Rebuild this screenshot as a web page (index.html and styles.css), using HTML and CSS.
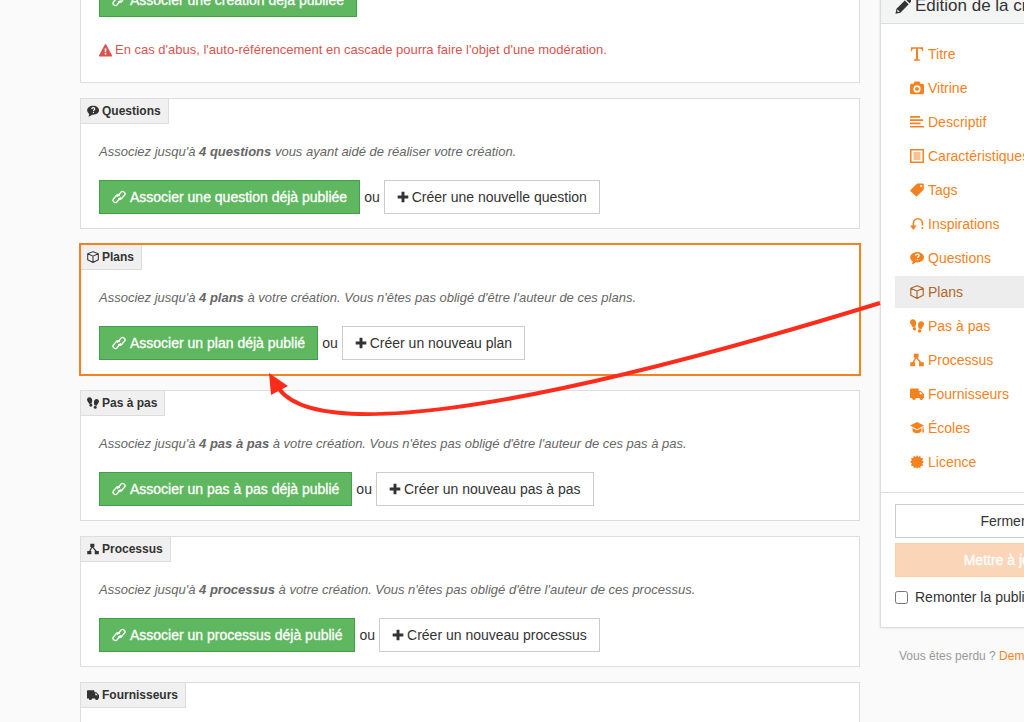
FILE: index.html
```
<!DOCTYPE html>
<html lang="fr">
<head>
    <meta charset="utf-8">
    <title>Edition de la création</title>
    <link rel="stylesheet" href="styles.css">
</head>
<body>
    <svg class="sprite" aria-hidden="true">
        <symbol id="link" viewBox="0 0 14 14">
            <g fill="none" stroke="currentColor" stroke-width="1.4" stroke-linecap="round">
                <path d="M5.600 6.200 9 2.100a2 2 0 0 1 2.900-.2l.4.400a2 2 0 0 1 .2 2.800L9.600 8.500a2 2 0 0 1-2.900.2"/>
                <path d="M8.400 7.800 5 11.900a2 2 0 0 1-2.900.2l-.4-.4a2 2 0 0 1-.2-2.800L4.400 5.500a2 2 0 0 1 2.900-.2"/>
            </g>
        </symbol>
        <symbol id="plus" viewBox="0 0 14 14">
            <path d="M5.300.8h3.400v4.500h4.500v3.400H8.700v4.500H5.300V8.700H.8V5.300h4.500z"/>
        </symbol>
        <symbol id="warning" viewBox="0 0 14 14">
            <path fill-rule="evenodd" d="M7 .3c.4 0 .7.200.9.500l6 11.200c.4.700-.1 1.500-.9 1.500H1c-.8 0-1.300-.8-.9-1.500L6.100.8c.2-.3.500-.5.900-.5zM6 4.800l.3 4h1.400l.3-4zM6.200 9.700v1.600h1.600V9.700z"/>
        </symbol>
        <symbol id="question" viewBox="0 0 14 14">
            <path d="M7.200 1c3.800 0 6.800 2.300 6.800 5.200s-3 5.200-6.800 5.200l-1.400-.1C4.600 12.600 3 13.200 1.300 13.300c.9-.8 1.400-1.700 1.400-2.800C1.200 9.500.2 8 .2 6.200.2 3.300 3.300 1 7.200 1z"/>
            <path d="M5.500 4.800c.1-1.100.8-1.700 1.800-1.700s1.800.6 1.800 1.500c0 1.200-1.600 1.200-1.600 2.400M7.500 8v1.200" fill="none" class="cut" stroke-width="1.300"/>
        </symbol>
        <symbol id="cube" viewBox="0 0 14 14">
            <path d="M7 .7 13.200 3.300v7L7 13.400.8 10.300v-7zM.8 3.300 7 6l6.200-2.700M7 6v7.400" fill="none" stroke="currentColor" stroke-width="1.200" stroke-linejoin="round"/>
        </symbol>
        <symbol id="steps" viewBox="0 0 14 14">
            <path d="M2.900.2c1.900 0 3.200 1.600 3.200 4 0 1.500-.5 2-.5 3.300l-3 .7C2.200 6.500 0 5.200 0 3 0 1.300 1.200.2 2.900.2z"/>
            <ellipse cx="4.500" cy="9.700" rx="1.700" ry="1.700"/>
            <path d="M11.200 2.200c1.700 0 2.800 1.200 2.800 2.900 0 2.200-2.100 3.300-2.500 5.100l-3-.7c0-1.300-.5-1.800-.5-3.300 0-2.400 1.300-4 3.200-4z"/>
            <ellipse cx="9.600" cy="12" rx="1.700" ry="1.800"/>
        </symbol>
        <symbol id="process" viewBox="0 0 14 14">
            <path d="M3.800.8h4.800v4H3.800zM.3 9.200h4.800v4H.3zM9 9.200h4.800v4H9z"/>
            <path d="M6 4 3 10M6.400 4.500 11 10" fill="none" stroke="currentColor" stroke-width="1.500"/>
        </symbol>
        <symbol id="truck" viewBox="0 0 14 14">
            <path fill-rule="evenodd" d="M.8 1.500h7.200c.4 0 .7.300.7.700v1.700h2.200L14 7v4h-.8a1.900 1.900 0 0 1-3.800 0H5.900a1.900 1.900 0 0 1-3.800 0H0V2.200c0-.4.400-.7.800-.7zM9.700 5v2.300h2.900L10.500 5z"/>
        </symbol>
        <symbol id="pencil" viewBox="0 0 14 14">
            <path fill-rule="evenodd" d="M.4 13.700 1.300 9.400 8.600 2.100l3.400 3.400-7.300 7.300zM2.200 10l-.4 1.500.8.800L4.100 12zM9.400 1.300 10.600.2a1.200 1.200 0 0 1 1.700 0l1.500 1.500a1.200 1.200 0 0 1 0 1.700l-1.100 1.200z"/>
        </symbol>
        <symbol id="text" viewBox="0 0 14 14">
            <path d="M1 .2h12l.3 4.100h-1c-.3-1.800-.9-2.500-2.300-2.500H8v9.700c0 .9.500 1.100 2.200 1.200v1.100H3.800v-1.100C5.500 12.600 6 12.400 6 11.500V1.800H4c-1.400 0-2 .7-2.300 2.500h-1z"/>
        </symbol>
        <symbol id="camera" viewBox="0 0 14 14">
            <path fill-rule="evenodd" d="M4.500.6h5l.8 2.100h1.900c1 0 1.800.8 1.800 1.800v6.900c0 1-.8 1.800-1.800 1.800H1.800c-1 0-1.800-.8-1.800-1.800V4.500c0-1 .8-1.800 1.800-1.800h1.900zM7 4.300a3.600 3.600 0 1 0 0 7.200 3.600 3.600 0 0 0 0-7.200zM7 6a1.900 1.900 0 1 1 0 3.800A1.900 1.900 0 0 1 7 6z"/>
        </symbol>
        <symbol id="lines" viewBox="0 0 14 14">
            <path d="M0 1h10v1.700H0zM0 4.300h13v1.700H0zM0 7.600h10.500v1.700H0zM0 10.900h14v1.700H0z"/>
        </symbol>
        <symbol id="list" viewBox="0 0 14 14">
            <path d="M.8.8h12.400v12.400H.8z" fill="none" stroke="currentColor" stroke-width="1.500"/>
            <path d="M3.500 4h7M3.500 6h7M3.500 8h7M3.500 10h7" fill="none" stroke="currentColor" stroke-width="1.100"/>
        </symbol>
        <symbol id="tag" viewBox="0 0 14 14">
            <path fill-rule="evenodd" d="M8 .5h4.700c.7 0 1.100.4 1.100 1.100v4.200c0 .5-.2 1-.5 1.300L7.200 13.100c-.4.400-1 .4-1.400 0L.5 8.300c-.4-.4-.4-1 0-1.400L6.600 1C7 .6 7.500.5 8 .5zM11.200 2a1.100 1.100 0 1 0 0 2.200 1.100 1.100 0 0 0 0-2.200z"/>
        </symbol>
        <symbol id="loop" viewBox="0 0 14 14">
            <path d="M3.400 11V6.300a4.500 4.500 0 0 1 9 0v2.200M12.400 10v2" fill="none" stroke="currentColor" stroke-width="1.600"/>
            <path d="M0 8.500h6.800L3.400 13z"/>
        </symbol>
        <symbol id="school" viewBox="0 0 14 14">
            <path d="M7 1 14 4.600 7 8.200 0 4.600zM2.500 7 7 9.300 11.500 7v3c-1 1.600-2.700 2.300-4.500 2.300S3.500 11.600 2.500 10zM12.700 5.500h.8L14 11.500h-1.800z"/>
        </symbol>
        <symbol id="badge" viewBox="0 0 14 14">
            <path d="M7 .3l1.300 1.600L10.300.8l.4 2.300 2.400.1-.9 2.200L14 7l-1.800 1.600.9 2.100-2.400.3-.4 2.300-2-1L7 13.700l-1.300-1.500-2 1-.4-2.200-2.400-.3.9-2.100L0 7l1.800-1.700-.9-2.100 2.400-.1.400-2.300 2 1.100z"/>
        </symbol>
    </svg>

    <div class="page">
        <main>
            <section class="panel panel-first">
                <div class="actions">
                    <button class="btn btn-green"><svg class="icon"><use href="#link"/></svg>Associer une création déjà publiée</button>
                </div>
                <p class="alert"><svg class="icon"><use href="#warning"/></svg>En cas d'abus, l'auto-référencement en cascade pourra faire l'objet d'une modération.</p>
            </section>

            <section class="panel">
                <h2><svg class="icon"><use href="#question"/></svg>Questions</h2>
                <p>Associez jusqu'à <b>4 questions</b> vous ayant aidé de réaliser votre création.</p>
                <div class="actions">
                    <button class="btn btn-green"><svg class="icon"><use href="#link"/></svg>Associer une question déjà publiée</button>
                    <span>ou</span>
                    <button class="btn btn-new"><svg class="icon"><use href="#plus"/></svg>Créer une nouvelle question</button>
                </div>
            </section>

            <section class="panel selected">
                <h2><svg class="icon"><use href="#cube"/></svg>Plans</h2>
                <p>Associez jusqu'à <b>4 plans</b> à votre création. Vous n'êtes pas obligé d'être l'auteur de ces plans.</p>
                <div class="actions">
                    <button class="btn btn-green"><svg class="icon"><use href="#link"/></svg>Associer un plan déjà publié</button>
                    <span>ou</span>
                    <button class="btn btn-new"><svg class="icon"><use href="#plus"/></svg>Créer un nouveau plan</button>
                </div>
            </section>

            <section class="panel">
                <h2><svg class="icon"><use href="#steps"/></svg>Pas à pas</h2>
                <p>Associez jusqu'à <b>4 pas à pas</b> à votre création. Vous n'êtes pas obligé d'être l'auteur de ces pas à pas.</p>
                <div class="actions">
                    <button class="btn btn-green"><svg class="icon"><use href="#link"/></svg>Associer un pas à pas déjà publié</button>
                    <span>ou</span>
                    <button class="btn btn-new"><svg class="icon"><use href="#plus"/></svg>Créer un nouveau pas à pas</button>
                </div>
            </section>

            <section class="panel">
                <h2><svg class="icon"><use href="#process"/></svg>Processus</h2>
                <p>Associez jusqu'à <b>4 processus</b> à votre création. Vous n'êtes pas obligé d'être l'auteur de ces processus.</p>
                <div class="actions">
                    <button class="btn btn-green"><svg class="icon"><use href="#link"/></svg>Associer un processus déjà publié</button>
                    <span>ou</span>
                    <button class="btn btn-new"><svg class="icon"><use href="#plus"/></svg>Créer un nouveau processus</button>
                </div>
            </section>

            <section class="panel panel-last">
                <h2><svg class="icon"><use href="#truck"/></svg>Fournisseurs</h2>
            </section>
        </main>

        <aside>
            <div class="side-box">
                <h1><svg class="icon"><use href="#pencil"/></svg>Edition de la création</h1>
                <nav>
                    <a href="#"><svg class="icon"><use href="#text"/></svg>Titre</a>
                    <a href="#"><svg class="icon"><use href="#camera"/></svg>Vitrine</a>
                    <a href="#"><svg class="icon"><use href="#lines"/></svg>Descriptif</a>
                    <a href="#"><svg class="icon"><use href="#list"/></svg>Caractéristiques</a>
                    <a href="#"><svg class="icon"><use href="#tag"/></svg>Tags</a>
                    <a href="#"><svg class="icon"><use href="#loop"/></svg>Inspirations</a>
                    <a href="#"><svg class="icon"><use href="#question"/></svg>Questions</a>
                    <a href="#" class="active"><svg class="icon"><use href="#cube"/></svg>Plans</a>
                    <a href="#"><svg class="icon"><use href="#steps"/></svg>Pas à pas</a>
                    <a href="#"><svg class="icon"><use href="#process"/></svg>Processus</a>
                    <a href="#"><svg class="icon"><use href="#truck"/></svg>Fournisseurs</a>
                    <a href="#"><svg class="icon"><use href="#school"/></svg>Écoles</a>
                    <a href="#"><svg class="icon"><use href="#badge"/></svg>Licence</a>
                </nav>
                <div class="side-footer">
                    <button class="btn">Fermer</button>
                    <button class="btn btn-orange" disabled>Mettre à jour</button>
                    <label><input type="checkbox">Remonter la publication</label>
                </div>
            </div>
            <p class="help">Vous êtes perdu ? <a href="#">Demandez de l'aide</a></p>
        </aside>
    </div>

    <!-- arrow from the menu to the Plans block -->
    <svg class="arrow" viewBox="260 290 630 140" width="630" height="140" aria-hidden="true">
        <path d="M279 389C315 437 500 420 880 303" fill="none" stroke="#fb2c1c" stroke-width="4"/>
        <path d="M269 373l19 13-17 9z" fill="#fb2c1c"/>
    </svg>
</body>
</html>
```
FILE: styles.css
```
*{
    box-sizing: border-box;
}
body{
    margin: 0;
    height: 100vh;
    overflow: hidden;
    background: #fafafa;
    color: #333;
    font-family: "Helvetica Neue", Helvetica, "Liberation Sans", Arial, sans-serif;
    font-size: 14px;
    line-height: 20px;
}
h1, h2, p{
    margin: 0;
}
a{
    color: #f58220;
    text-decoration: none;
}
.sprite{
    display: none;
}
.icon{
    width: 14px;
    height: 14px;
    margin-right: 4px;
    flex: none;
    fill: currentColor;
}
.cut{
    stroke: #fff;
}

/* the side column runs past the right edge of the window */
.page{
    display: flex;
    gap: 20px;
    margin: -20px -102px 0 80px;
}
main{
    flex: 1;
}

.panel{
    background: #fff;
    border: 1px solid #ddd;
    margin-bottom: 15px;
    padding-bottom: 14px;
}
.panel h2{
    display: inline-flex;
    align-items: center;
    vertical-align: top;
    height: 25px;
    padding: 0 7px 0 6px;
    background: #f0f0f0;
    border: 1px solid #ddd;
    border-width: 0 1px 1px 0;
    font-size: 12px;
}
.panel h2 .icon{
    width: 12px;
    height: 12px;
    margin-right: 3px;
}
.panel p{
    margin: 18px 18px;
    color: #666;
    font-size: 13px;
    font-style: italic;
}
.panel.selected{
    border-color: #f58220;
    box-shadow: 0 0 0 1px #f58220;
}
.panel-first{
    border-top: 0;
    padding: 3px 0 22px;
}
.panel-first .alert{
    display: flex;
    align-items: center;
    margin: 23px 18px 0;
    color: #d9534f;
    font-style: normal;
}
.alert .icon{
    width: 13px;
    height: 13px;
    margin-right: 3px;
}
.panel-last{
    padding-bottom: 100px;
}

.actions{
    display: flex;
    align-items: center;
    gap: 4px;
    padding: 0 18px;
}
.btn{
    display: flex;
    align-items: center;
    justify-content: center;
    height: 34px;
    padding: 0 12px;
    background: #fff;
    border: 1px solid #ccc;
    color: #333;
    font: inherit;
    white-space: nowrap;
}
.btn-green{
    background: #5fb760;
    border-color: #449d48;
    color: #fff;
    -webkit-text-stroke: 0.3px #fff;
}
.btn-new .icon{
    width: 12px;
    height: 12px;
    margin-right: 3px;
}
.btn-orange{
    background: #fad5b8;
    border-color: #f9cfae;
    color: #fff;
    -webkit-text-stroke: 0.3px #fff;
}

aside{
    width: 246px;
    margin-top: 8px;
}
.side-box{
    background: #fff;
    border: 1px solid #ddd;
    border-top: 0;
    box-shadow: 0 0 2px rgba(0, 0, 0, 0.12);
}
.side-box h1{
    display: flex;
    align-items: center;
    height: 36px;
    padding: 0 14px;
    background: #f3f4f4;
    border-bottom: 1px solid #ddd;
    font-size: 17px;
    font-weight: normal;
    white-space: nowrap;
}
.side-box h1 .icon{
    width: 16px;
    height: 16px;
}
nav{
    display: flex;
    flex-direction: column;
    gap: 2px;
    padding: 14px 14px;
}
nav a{
    display: flex;
    align-items: center;
    height: 32px;
    padding: 0 15px;
}
nav .active{
    background: #ededed;
    color: #b0682c;
}
.side-footer{
    display: flex;
    flex-direction: column;
    gap: 5px;
    padding: 11px 14px 15px;
    border-top: 1px solid #ddd;
}
.side-footer label{
    display: flex;
    align-items: center;
    height: 30px;
    white-space: nowrap;
}
.side-footer input{
    margin: 0 7px 0 0;
}
.help{
    margin-top: 18px;
    padding-left: 19px;
    color: #999;
    font-size: 12px;
    white-space: nowrap;
}

.arrow{
    position: absolute;
    top: 290px;
    left: 260px;
    pointer-events: none;
}
```
